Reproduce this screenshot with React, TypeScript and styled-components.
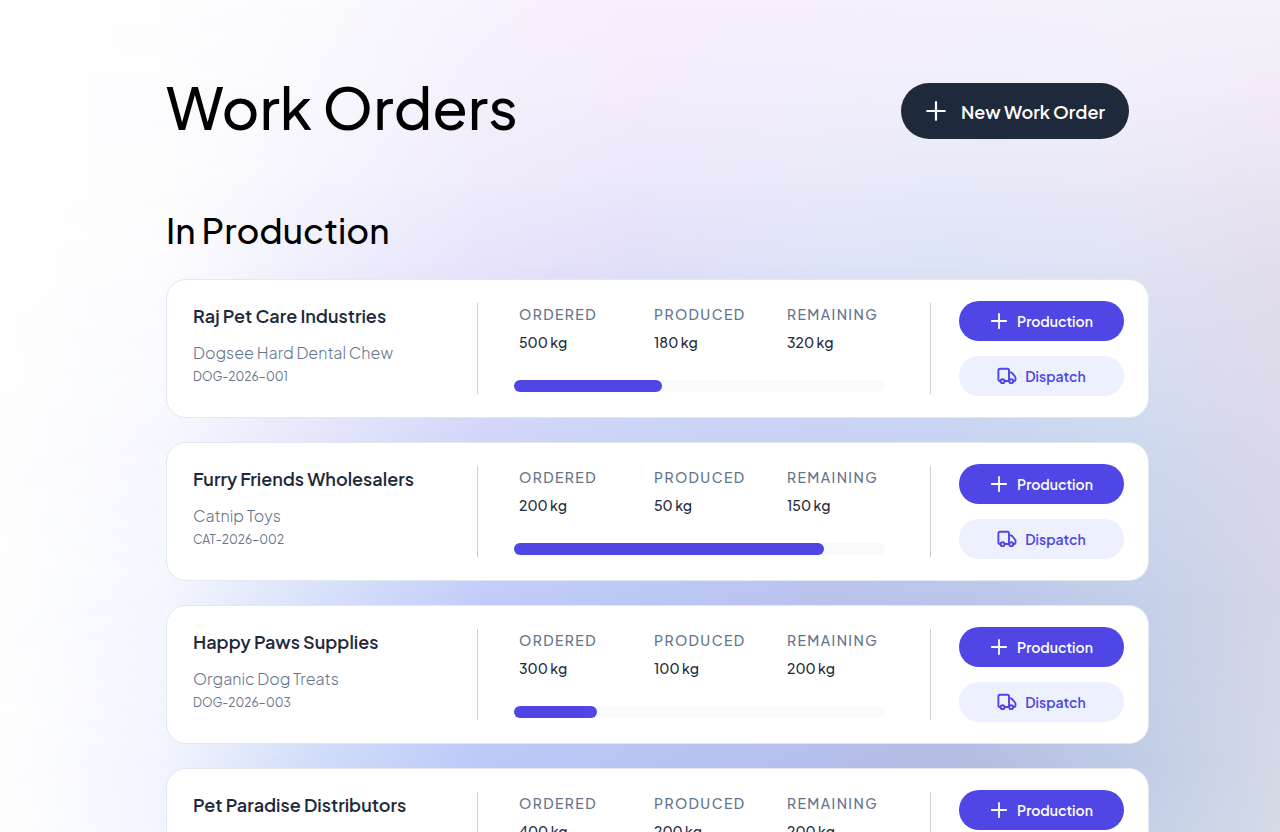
import React from "react";
import styled, { createGlobalStyle } from "styled-components";

const GlobalStyle = createGlobalStyle`
  *, *::before, *::after { box-sizing: border-box; }
  html, body, #root { height: 100%; }
  body {
    margin: 0;
    font-family: "Plus Jakarta Sans", Inter, "Liberation Sans", sans-serif;
    color: #1e293b;
    background: #ffffff;
    overflow: hidden;
  }
  button { font: inherit; border: 0; cursor: pointer; }
`;

const Screen = styled.div`
  position: relative;
  isolation: isolate;
  height: 100%;
`;

const Backdrop = styled.div`
  position: absolute;
  inset: 0;
  z-index: -1;
`;

const Band = styled.div<{ $colors: string[]; $from: number; $to: number }>`
  position: absolute;
  inset: 0;
  background: linear-gradient(90deg, ${(p) => p.$colors.join(", ")});
  mask-image: linear-gradient(
    180deg,
    transparent ${(p) => p.$from}%,
    #000 ${(p) => p.$to}%
  );
`;

const Page = styled.main`
  height: 100%;
  overflow-y: auto;
  scrollbar-width: none;
  padding: 76px 131px 24px 166px;
`;

const Header = styled.header`
  display: flex;
  align-items: center;
  justify-content: space-between;
  padding-right: 20px;
  height: 70px;
`;

const Title = styled.h1`
  margin: 0;
  padding-bottom: 8px;
  font-size: 58px;
  line-height: 64px;
  font-weight: 500;
  color: #000;
`;

const NewOrderButton = styled.button`
  display: flex;
  align-items: center;
  justify-content: center;
  gap: 14px;
  width: 228px;
  height: 56px;
  padding: 0;
  border-radius: 28px;
  background: #1e293b;
  color: #fff;
  && { font-size: 18px; font-weight: 600; }
`;

const SectionTitle = styled.h2`
  margin: 60px 0 25px;
  font-size: 35px;
  line-height: 48px;
  font-weight: 500;
  color: #000;
`;

const OrderList = styled.ul`
  display: flex;
  flex-direction: column;
  gap: 24px;
  margin: 0;
  padding: 0;
  list-style: none;
`;

const OrderCard = styled.li`
  display: flex;
  align-items: flex-start;
  height: 139px;
  padding: 21px 24px 0 26px;
  border: 1px solid #e2e8f0;
  border-radius: 20px;
  background: #fff;
`;

const Summary = styled.div`
  flex: 1;
  min-width: 0;
  padding-top: 3px;
`;

const Customer = styled.h3`
  margin: 0 0 13px;
  font-size: 18px;
  line-height: 24px;
  font-weight: 600;
`;

const Product = styled.p`
  margin: 0;
  font-size: 16px;
  line-height: 24px;
  font-weight: 300;
  color: #64748b;
`;

const Code = styled.p`
  margin: 3px 0 0;
  font-size: 12px;
  line-height: 18px;
  color: #64748b;
`;

const Progress = styled.div`
  display: flex;
  flex-direction: column;
  width: 454px;
  height: 91px;
  margin-top: 2px;
  padding: 0 45px 0 36px;
  border: solid #cbd0d6;
  border-width: 0 1px;
`;

const Stats = styled.dl`
  display: grid;
  grid-template-columns: 135px 133px 1fr;
  margin: 0;
  padding-left: 5px;
`;

const Stat = styled.div``;

const StatLabel = styled.dt`
  font-size: 14px;
  line-height: 22px;
  font-weight: 500;
  letter-spacing: 0.1em;
  text-transform: uppercase;
  color: #64748b;
`;

const StatValue = styled.dd`
  margin: 6px 0 0;
  font-size: 14px;
  line-height: 22px;
  font-weight: 500;
`;

const Track = styled.div`
  height: 12px;
  margin-top: 27px;
  border-radius: 6px;
  background: #f8fafc;
`;

const Fill = styled.div`
  height: 100%;
  border-radius: 6px;
  background: #4f46e5;
`;

const Actions = styled.div`
  display: flex;
  flex-direction: column;
  gap: 15px;
  width: 165px;
  margin-left: 28px;
`;

const ActionButton = styled.button<{ $primary?: boolean }>`
  display: flex;
  align-items: center;
  justify-content: center;
  gap: ${(p) => (p.$primary ? 9 : 8)}px;
  height: 40px;
  padding: 0;
  border-radius: 20px;
  background: ${(p) => (p.$primary ? "#4f46e5" : "#edf1ff")};
  color: ${(p) => (p.$primary ? "#fff" : "#4f46e5")};
  && { font-size: 14px; font-weight: 600; }
`;

const PlusIcon = ({ size }: { size: number }) => (
  <svg width={size} height={size} viewBox="0 0 20 20" fill="none" stroke="currentColor" strokeWidth="2" strokeLinecap="round" aria-hidden="true">
    <path d="M10 2v16M2 10h16" />
  </svg>
);

const TruckIcon = () => (
  <svg width="20" height="20" viewBox="0 0 20 20" fill="none" stroke="currentColor" strokeWidth="1.9" strokeLinecap="round" strokeLinejoin="round" aria-hidden="true">
    <path d="M3.4 15H2.6a1.2 1.2 0 0 1-1.2-1.2V4.4A1.6 1.6 0 0 1 3 2.8h7.4A1.6 1.6 0 0 1 12 4.400V15H7.800" />
    <path d="M12 6.400h1.800c.6 0 1 .2 1.400.7l2.800 3.400c.3.400.5.800.5 1.300v2a1.200 1.200 0 0 1-1.200 1.200h-.6" />
    <circle cx="5.600" cy="15.200" r="1.900" />
    <circle cx="14.200" cy="15.200" r="1.900" />
  </svg>
);

const bands = [
  { y: 0, colors: ["#ffffff", "#fefefe", "#fbfafe", "#f8f3fd", "#f8effc", "#f7effc", "#f6f1fc", "#f5f2fb", "#f6f1fa"] },
  { y: 12, colors: ["#ffffff", "#fdfdff", "#f8f7fe", "#f5effc", "#f3ebfb", "#f1edfb", "#efeefa", "#f1eef9", "#f1eaf6"] },
  { y: 22, colors: ["#ffffff", "#fdfdfe", "#f5f4fd", "#efebfb", "#ebe7fa", "#e9e9f9", "#e6e9f8", "#e9e8f6", "#ebe3f1"] },
  { y: 32, colors: ["#ffffff", "#fcfcfe", "#eeeefc", "#e6e3fa", "#e0dff8", "#dee3f7", "#dce3f5", "#dfe3f4", "#e3ddec"] },
  { y: 52, colors: ["#fefefe", "#f7f8fe", "#e4e6fb", "#d2d6f9", "#cbd4f7", "#c9d1f5", "#c9d4f2", "#cddaf0", "#dbd9ea"] },
  { y: 71, colors: ["#fefefe", "#f4f7fe", "#d8e1fa", "#c4cdf9", "#bcc8f5", "#bbc3ee", "#bcc5ea", "#c3d0ea", "#d4d6e6"] },
  { y: 91, colors: ["#fefefe", "#f2f5fe", "#d1dcf9", "#bccaf8", "#b7c5f3", "#b6bfec", "#b5bce2", "#bfcbe6", "#d4d9e6"] },
  { y: 100, colors: ["#fefefe", "#f1f5fe", "#cedafa", "#bac8f8", "#b5c3f3", "#b4bdea", "#b4bbe2", "#c1cfe8", "#d5dbe6"] },
];

const orders = [
  { customer: "Raj Pet Care Industries", product: "Dogsee Hard Dental Chew", code: "DOG-2026-001", ordered: 500, produced: 180, remaining: 320, progress: 40 },
  { customer: "Furry Friends Wholesalers", product: "Catnip Toys", code: "CAT-2026-002", ordered: 200, produced: 50, remaining: 150, progress: 83.5 },
  { customer: "Happy Paws Supplies", product: "Organic Dog Treats", code: "DOG-2026-003", ordered: 300, produced: 100, remaining: 200, progress: 22.5 },
  { customer: "Pet Paradise Distributors", product: "Premium Cat Food", code: "CAT-2026-004", ordered: 400, produced: 200, remaining: 200, progress: 50 },
];

export default function App() {
  return (
    <Screen>
      <GlobalStyle />
      <Backdrop aria-hidden="true">
        {bands.map((band, i) => (
          <Band key={band.y} $colors={band.colors} $from={i === 0 ? -1 : bands[i - 1].y} $to={band.y} />
        ))}
      </Backdrop>
      <Page>
        <Header>
          <Title>Work Orders</Title>
          <NewOrderButton type="button">
            <PlusIcon size={22} />
            New Work Order
          </NewOrderButton>
        </Header>
        <SectionTitle>In Production</SectionTitle>
        <OrderList>
          {orders.map((o) => (
            <OrderCard key={o.code}>
              <Summary>
                <Customer>{o.customer}</Customer>
                <Product>{o.product}</Product>
                <Code>{o.code}</Code>
              </Summary>
              <Progress>
                <Stats>
                  <Stat>
                    <StatLabel>Ordered</StatLabel>
                    <StatValue>{o.ordered} kg</StatValue>
                  </Stat>
                  <Stat>
                    <StatLabel>Produced</StatLabel>
                    <StatValue>{o.produced} kg</StatValue>
                  </Stat>
                  <Stat>
                    <StatLabel>Remaining</StatLabel>
                    <StatValue>{o.remaining} kg</StatValue>
                  </Stat>
                </Stats>
                <Track>
                  <Fill style={{ width: `${o.progress}%` }} />
                </Track>
              </Progress>
              <Actions>
                <ActionButton type="button" $primary>
                  <PlusIcon size={18} />
                  Production
                </ActionButton>
                <ActionButton type="button">
                  <TruckIcon />
                  Dispatch
                </ActionButton>
              </Actions>
            </OrderCard>
          ))}
        </OrderList>
      </Page>
    </Screen>
  );
}
